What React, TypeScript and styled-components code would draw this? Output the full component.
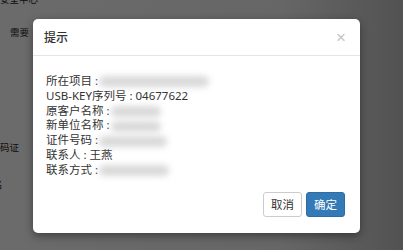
import React from 'react';
import styled, {createGlobalStyle} from 'styled-components';

const GlobalStyle = createGlobalStyle`
  html, body {
    margin: 0;
    padding: 0;
    width: 403px;
    height: 250px;
    overflow: hidden;
  }
  body {
    font-family: "Noto Sans", "Noto Sans CJK SC", sans-serif;
    color: #333;
  }
`

const Page = styled.div`
  display: flow-root;
  width: 403px;
  height: 250px;
  background: #fff;
  position: relative;
  overflow: hidden;
  font-size: 9.5px;
`

const PageText = styled.div<{ $top: number; $left: number }>`
  margin: ${p => p.$top}px 0 0 ${p => p.$left}px;
  line-height: 12px;
  height: 12px;
  color: #1e1e1e;
  white-space: nowrap;
`

const Backdrop = styled.div`
  position: absolute;
  inset: 0;
  background: linear-gradient(90deg, rgba(0, 0, 0, 0.58) 0%, rgba(0, 0, 0, 0.6) 70%, rgba(0, 0, 0, 0.68) 100%);
  display: flex;
  align-items: flex-start;
  padding: 19px 0 0 33px;
`

const Dialog = styled.div`
  width: 327px;
  background: #fff;
  border-radius: 5px;
  box-shadow: 0 3px 9px rgba(0, 0, 0, 0.4);
`

const Header = styled.div`
  display: flex;
  align-items: center;
  justify-content: space-between;
  height: 36px;
  padding: 0 14px 0 11px;
  border-bottom: 1px solid #e5e5e5;
`

const Title = styled.h4`
  margin: 0;
  font-size: 12px;
  font-weight: 500;
  color: #333;
`

const Close = styled.span`
  font-family: "Liberation Sans", sans-serif;
  font-size: 17px;
  color: #c4c4c4;
  line-height: 1;
`

const Body = styled.div`
  padding: 18px 13px 14px;
  font-size: 11.5px;
  line-height: 14.8px;
`

const Line = styled.div`
  height: 14.8px;
  white-space: nowrap;
`

const Colon = styled.span`
  margin: 0 3px;
`

const Hidden = styled.span<{ $width: number }>`
  display: inline-block;
  vertical-align: middle;
  width: ${p => p.$width}px;
  height: 11px;
  margin-left: -2px;
  background: #d9d9d9;
  border-radius: 6px;
  filter: blur(3px);
`

const Footer = styled.div`
  display: flex;
  justify-content: flex-end;
  gap: 4px;
  padding: 0 15px 16px;
`

const Button = styled.button<{ $primary?: boolean }>`
  height: 25px;
  padding: 0 7px;
  font-family: inherit;
  font-size: 11.5px;
  border-radius: 3px;
  border: 1px solid ${p => p.$primary ? '#2e6da4' : '#ccc'};
  background: ${p => p.$primary ? '#337ab7' : '#fff'};
  color: ${p => p.$primary ? '#fff' : '#333'};
`

const rows: { label: string; value?: string; hidden?: number }[] = [
    {label: '所在项目', hidden: 110},
    {label: 'USB-KEY序列号', value: '04677622'},
    {label: '原客户名称', hidden: 50},
    {label: '新单位名称', hidden: 50},
    {label: '证件号码', hidden: 68},
    {label: '联系人', value: '王燕'},
    {label: '联系方式', hidden: 70},
]

const App: React.FC = () => {
    return (
        <>
            <GlobalStyle/>
            <Page>
                <PageText $top={-6} $left={0}>安全中心</PageText>
                <PageText $top={21} $left={10}>需要</PageText>
                <PageText $top={103} $left={0}>码证</PageText>
                <PageText $top={25} $left={-7}>名</PageText>
                <Backdrop>
                    <Dialog>
                        <Header>
                            <Title>提示</Title>
                            <Close>×</Close>
                        </Header>
                        <Body>
                            {rows.map((row) => (
                                <Line key={row.label}>
                                    {row.label}<Colon>:</Colon>{row.value}
                                    {row.hidden && <Hidden $width={row.hidden}/>}
                                </Line>
                            ))}
                        </Body>
                        <Footer>
                            <Button>取消</Button>
                            <Button $primary>确定</Button>
                        </Footer>
                    </Dialog>
                </Backdrop>
            </Page>
        </>
    )
}

export default App
